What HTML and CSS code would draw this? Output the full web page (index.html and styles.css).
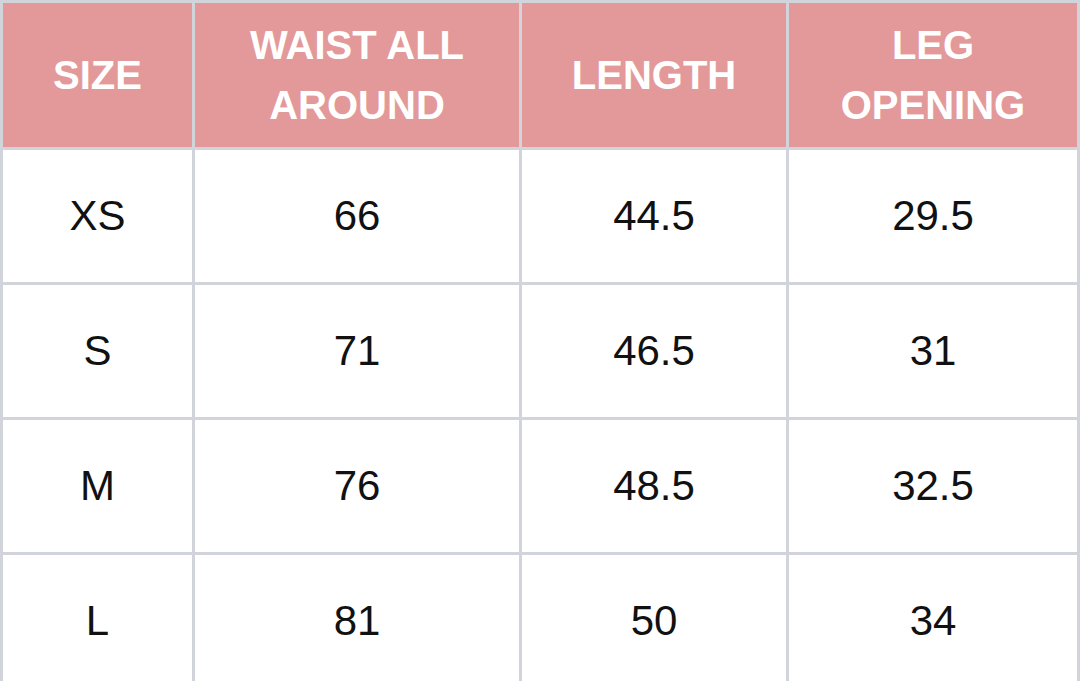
FILE: index.html
```html
<!DOCTYPE html>
<html>
<head>
<meta charset="utf-8">
<link rel="stylesheet" href="styles.css">
</head>
<body>
<div class="chart">
  <div class="head">SIZE</div>
  <div class="head">WAIST ALL<br>AROUND</div>
  <div class="head">LENGTH</div>
  <div class="head">LEG<br>OPENING</div>

  <div class="cell">XS</div><div class="cell">66</div><div class="cell">44.5</div><div class="cell">29.5</div>
  <div class="cell">S</div><div class="cell">71</div><div class="cell">46.5</div><div class="cell">31</div>
  <div class="cell">M</div><div class="cell">76</div><div class="cell">48.5</div><div class="cell">32.5</div>
  <div class="cell">L</div><div class="cell">81</div><div class="cell">50</div><div class="cell">34</div>
</div>
</body>
</html>
```
FILE: styles.css
```css
html, body {
  margin: 0;
  padding: 0;
  background: #ffffff;
}
body {
  width: 1080px;
  height: 681px;
  overflow: hidden;
}
.chart {
  display: grid;
  grid-template-columns: 189px 324px 264px 288px;
  grid-template-rows: 144px repeat(4, 132px);
  gap: 3px;
  padding: 3px;
  background: #d1d5db;
  font-family: "Liberation Sans", Arial, sans-serif;
}
.head {
  background: #e39999;
  color: #ffffff;
  font-weight: 700;
  font-size: 40px;
  line-height: 60px;
  display: flex;
  align-items: center;
  justify-content: center;
  text-align: center;
}
.cell {
  background: #ffffff;
  color: #111111;
  font-size: 42px;
  display: flex;
  align-items: center;
  justify-content: center;
}
```
